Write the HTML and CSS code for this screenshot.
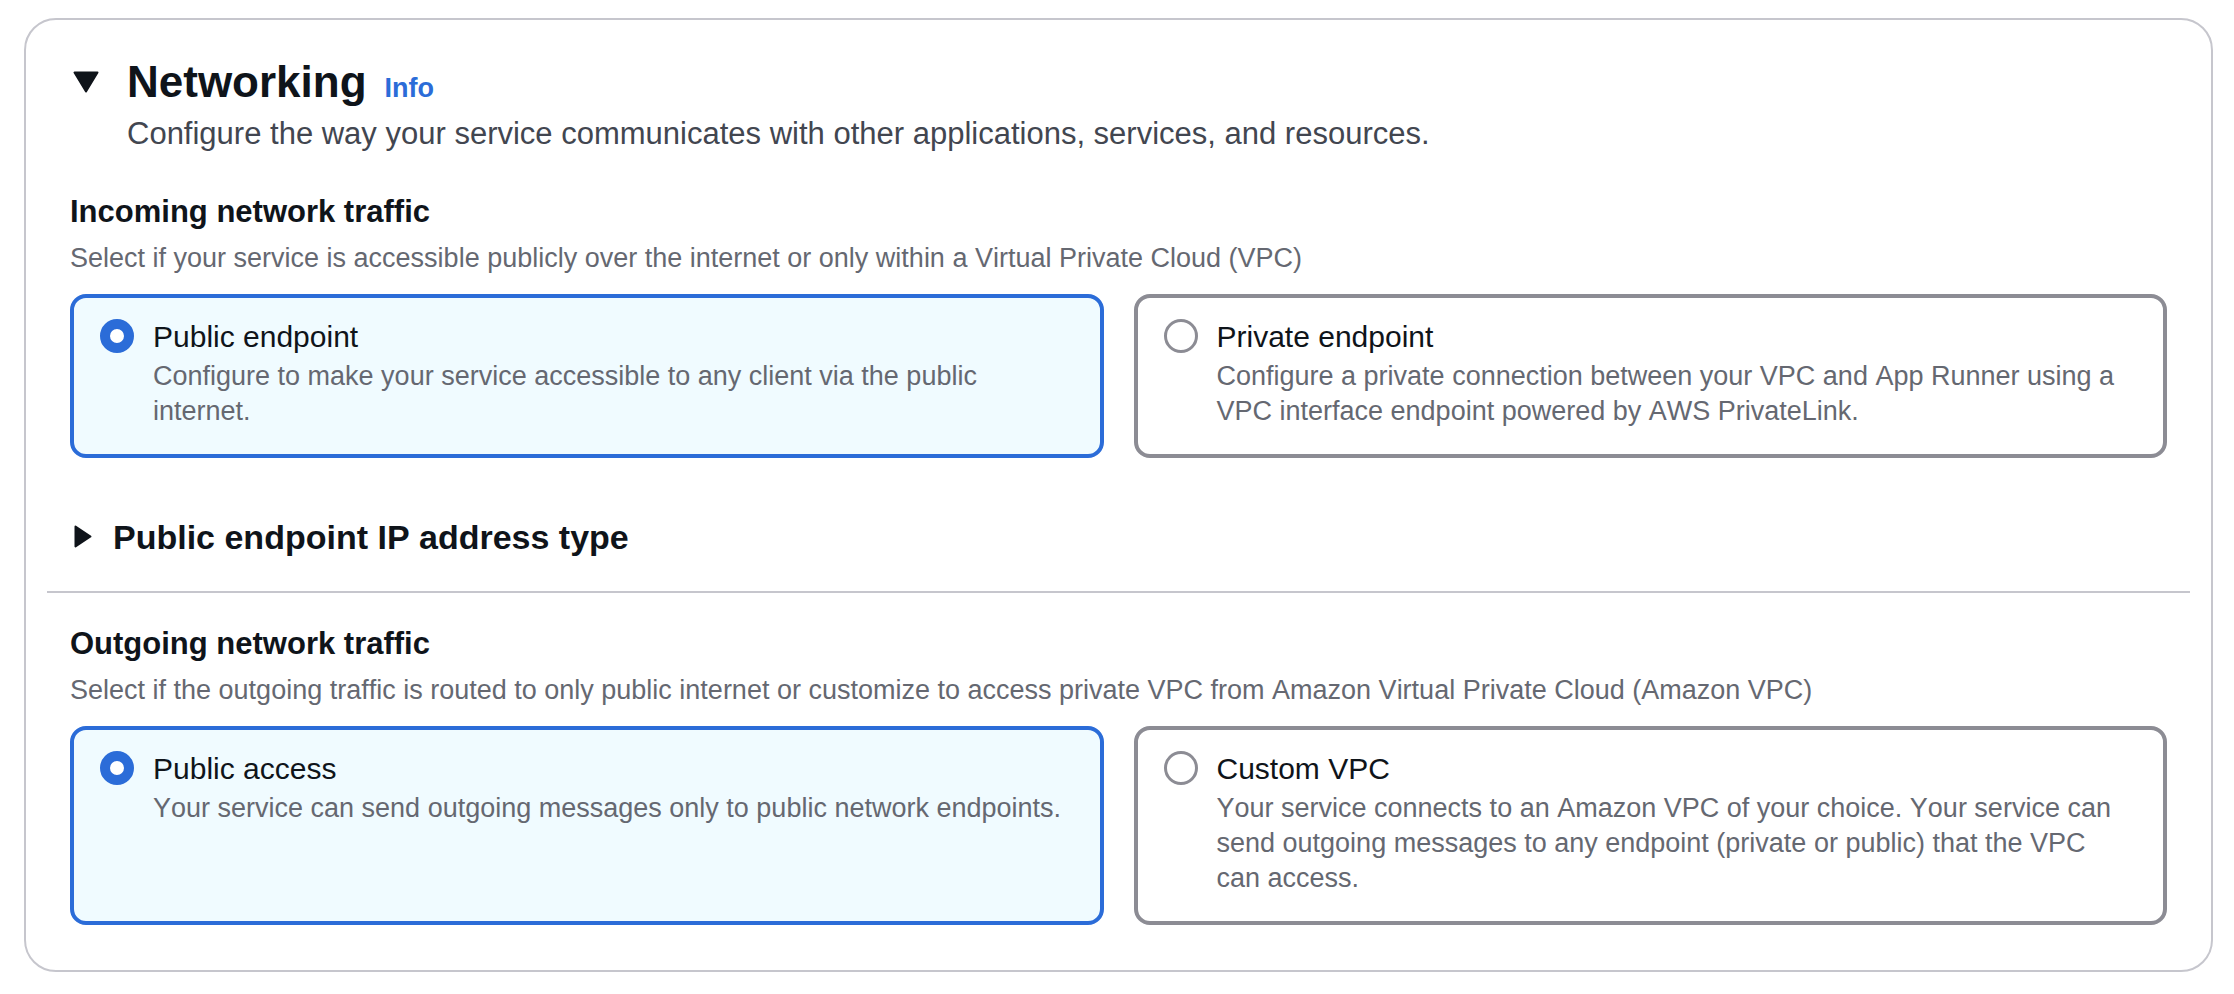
FILE: index.html
```html
<!DOCTYPE html>
<html lang="en">
<head>
<meta charset="utf-8">
<title>Networking</title>
<link rel="stylesheet" href="styles.css">
</head>
<body>
<div class="container">
  <div class="title-row">
    <span class="caret caret-down">
      <svg width="26" height="22" viewBox="0 0 26 22"><polygon points="1.5,1.5 24.5,1.5 13,20.5" fill="#0f141a" stroke="#0f141a" stroke-width="2" stroke-linejoin="round"/></svg>
    </span>
    <h2 class="title">Networking</h2>
    <a class="info">Info</a>
  </div>
  <p class="header-desc">Configure the way your service communicates with other applications, services, and resources.</p>

  <section class="field field-first">
    <div class="label">Incoming network traffic</div>
    <div class="desc">Select if your service is accessible publicly over the internet or only within a Virtual Private Cloud (VPC)</div>
    <div class="tiles">
      <div class="tile selected">
        <span class="radio checked"></span>
        <div class="tile-text">
          <div class="tile-title">Public endpoint</div>
          <div class="tile-desc">Configure to make your service accessible to any client via the public internet.</div>
        </div>
      </div>
      <div class="tile">
        <span class="radio"></span>
        <div class="tile-text">
          <div class="tile-title">Private endpoint</div>
          <div class="tile-desc">Configure a private connection between your VPC and App Runner using a VPC interface endpoint powered by AWS PrivateLink.</div>
        </div>
      </div>
    </div>
  </section>

  <div class="expander">
    <span class="caret caret-right">
      <svg width="18" height="23" viewBox="0 0 18 23"><polygon points="1.5,1.5 16.5,11.5 1.5,21.5" fill="#0f141a" stroke="#0f141a" stroke-width="2" stroke-linejoin="round"/></svg>
    </span>
    <span>Public endpoint IP address type</span>
  </div>

  <hr class="divider">

  <section class="field">
    <div class="label">Outgoing network traffic</div>
    <div class="desc">Select if the outgoing traffic is routed to only public internet or customize to access private VPC from Amazon Virtual Private Cloud (Amazon VPC)</div>
    <div class="tiles">
      <div class="tile selected">
        <span class="radio checked"></span>
        <div class="tile-text">
          <div class="tile-title">Public access</div>
          <div class="tile-desc">Your service can send outgoing messages only to public network endpoints.</div>
        </div>
      </div>
      <div class="tile">
        <span class="radio"></span>
        <div class="tile-text">
          <div class="tile-title">Custom VPC</div>
          <div class="tile-desc">Your service connects to an Amazon VPC of your choice. Your service can send outgoing messages to any endpoint (private or public) that the VPC can access.</div>
        </div>
      </div>
    </div>
  </section>
</div>
</body>
</html>
```

FILE: styles.css
```css
* {
  box-sizing: border-box;
}

html, body {
  margin: 0;
  padding: 0;
  background: #ffffff;
}

body {
  font-family: "Liberation Sans", Arial, sans-serif;
  font-kerning: none;
  color: #0f141a;
  padding-top: 18px;
}

.container {
  margin: 0 21px 0 24px;
  border: 2px solid #c6c6cd;
  border-radius: 32px;
  padding: 36px 44px 45px 44px;
}

.title-row {
  display: flex;
  align-items: baseline;
  height: 52px;
}

.caret {
  display: flex;
  align-self: center;
}

.caret-down {
  margin-left: 3px;
  margin-right: 28px;
}

.title {
  margin: 0;
  font-size: 44px;
  line-height: 52px;
  font-weight: 700;
  color: #0f141a;
}

.info {
  margin-left: 18px;
  font-size: 27px;
  font-weight: 700;
  line-height: 52px;
  color: #2b6cd8;
  text-decoration: none;
}

.header-desc {
  margin: 6px 0 0 57px;
  font-size: 31px;
  line-height: 40px;
  color: #424650;
}

.field-first {
  margin-top: 37.5px;
}

.label {
  font-size: 31px;
  line-height: 40px;
  font-weight: 700;
  color: #0f141a;
}

.desc {
  margin-top: 8px;
  font-size: 27px;
  line-height: 36px;
  color: #656871;
}

.tiles {
  margin-top: 18px;
  display: grid;
  grid-template-columns: 1fr 1fr;
  gap: 30px;
}

.tile {
  display: flex;
  align-items: flex-start;
  gap: 19px;
  border: 4px solid #8c8c94;
  border-radius: 16px;
  padding: 20px 32px 25px 26px;
  background: #ffffff;
}

.tile.selected {
  border-color: #2b6cd8;
  background: #f0fbff;
}

.radio {
  flex: 0 0 34px;
  width: 34px;
  height: 34px;
  margin-top: 1px;
  border-radius: 50%;
  border: 3.5px solid #8c8c94;
  background: #ffffff;
}

.radio.checked {
  border: 10px solid #2b6cd8;
}

.tile-text {
  flex: 1 1 auto;
  min-width: 0;
}

.tile-title {
  font-size: 30px;
  line-height: 38px;
  color: #0f141a;
}

.tile-desc {
  margin-top: 3px;
  font-size: 27px;
  line-height: 35px;
  color: #656871;
}

.expander {
  display: flex;
  align-items: center;
  margin-top: 57px;
  font-size: 34px;
  line-height: 44px;
  font-weight: 700;
  color: #0f141a;
}

.caret-right {
  margin-left: 4px;
  margin-right: 21px;
}

.divider {
  margin: 32px -23px 0 -23px;
  border: 0;
  height: 2px;
  background: #c6c6cd;
}

.divider + .field {
  margin-top: 31px;
}
```
